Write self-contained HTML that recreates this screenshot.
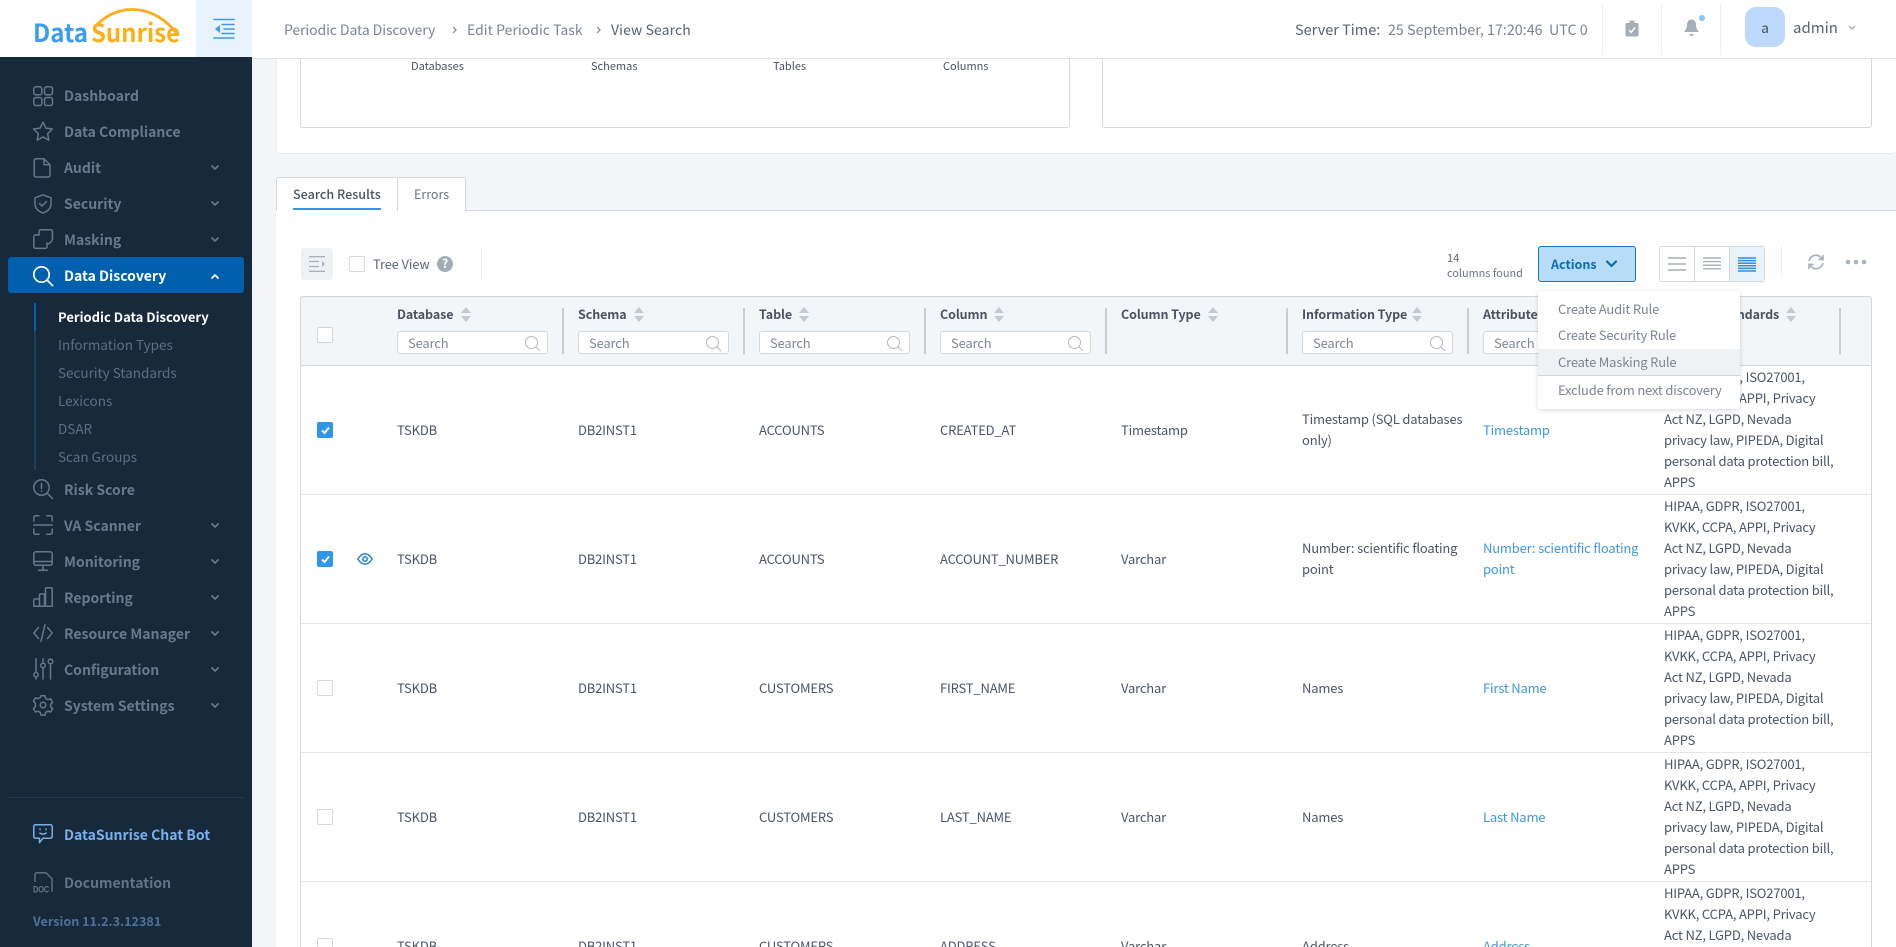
<!DOCTYPE html>
<html lang="en"><head><meta charset="utf-8"><title>DataSunrise</title>
<style>
*{box-sizing:border-box}
html,body{margin:0;padding:0;width:1896px;height:947px;overflow:hidden;background:#f3f6f8}
body{position:relative;font-family:"Noto Sans CJK SC","Liberation Sans",sans-serif;font-size:13px;letter-spacing:-.18px;color:#4b5563}
.a{position:absolute}
.t{position:absolute;white-space:nowrap;line-height:20px}
svg{position:absolute;display:block;overflow:visible}
#side{position:absolute;left:0;top:0;width:252px;height:947px;background:#172a3b}
.m{position:absolute;left:64px;white-space:nowrap;line-height:20px;font-size:14px;font-weight:700;letter-spacing:0;color:#647b8e}
.s{position:absolute;left:58px;white-space:nowrap;line-height:20px;font-size:13.5px;letter-spacing:0;color:#587084}
.i{fill:none;stroke:#62798b;stroke-width:1.5;stroke-linecap:round;stroke-linejoin:round}
.ch{fill:none;stroke:#62798b;stroke-width:1.8;stroke-linecap:round;stroke-linejoin:round}
.row{position:absolute;left:301px;width:1570px;height:129px;background:#fff;border-bottom:1px solid #e4e7ea}
.c{position:absolute;top:-1px;height:128px;display:flex;align-items:center;line-height:21px;white-space:nowrap;color:#4b5563}
.c5{position:absolute;top:0;height:65px;width:170px;overflow:hidden;padding-top:53px;line-height:21px;white-space:nowrap;color:#4b5563}
.l{color:#3f96e3}
.cb{position:absolute;left:16px;top:56px;width:16px;height:16px;border:1px solid #d3d7db;border-radius:2px;background:#fff}
.cb.on{background:#2f96ee;border-color:#2f96ee}
.hd{position:absolute;top:304px;white-space:nowrap;line-height:20px;font-size:12.5px;letter-spacing:-.1px;font-weight:700;color:#4a5360}
.sep{position:absolute;top:308px;width:2px;height:46px;background:#c6ced6}
.inp{position:absolute;top:331px;width:151px;height:23px;background:#fff;border:1px solid #d4d8dc;border-radius:3px;padding-left:10px;line-height:21px;font-size:13px;color:#7f8791}
.mi{position:absolute;left:20px;white-space:nowrap;line-height:20px;font-size:13px;letter-spacing:-.19px;color:#7d8590}
</style></head><body>

<!-- HEADER -->
<div class="a" style="left:252px;top:0;width:1644px;height:59px;background:#fff;border-bottom:1px solid #e2e5e8"></div>
<div class="t" style="left:284px;top:20px;font-size:14px;letter-spacing:-.1px;color:#7c858f">Periodic Data Discovery</div>
<svg style="left:452px;top:26px" width="5" height="8"><path d="M1 1l3 3-3 3" fill="none" stroke="#7c858f" stroke-width="1.2"/></svg>
<div class="t" style="left:467px;top:20px;font-size:14px;letter-spacing:.02px;color:#7c858f">Edit Periodic Task</div>
<svg style="left:596px;top:26px" width="5" height="8"><path d="M1 1l3 3-3 3" fill="none" stroke="#7c858f" stroke-width="1.2"/></svg>
<div class="t" style="left:611px;top:20px;font-size:14px;letter-spacing:.1px;color:#596270">View Search</div>

<div class="t" style="left:1295px;top:20px;font-size:14.5px;letter-spacing:0;color:#596270">Server Time:</div>
<div class="t" style="left:1388px;top:20px;font-size:14.3px;letter-spacing:0;color:#7c858f">25 September, 17:20:46</div>
<div class="t" style="left:1549px;top:20px;font-size:14.3px;letter-spacing:0;color:#7c858f">UTC 0</div>
<div class="a" style="left:1602px;top:3px;width:1px;height:52px;background:#eef0f2"></div>
<div class="a" style="left:1661px;top:3px;width:1px;height:52px;background:#eef0f2"></div>
<div class="a" style="left:1720px;top:3px;width:1px;height:52px;background:#eef0f2"></div>
<svg style="left:1625px;top:20px" width="14" height="17"><path d="M1.5 3h11a1 1 0 0 1 1 1v11.5a1 1 0 0 1-1 1h-11a1 1 0 0 1-1-1V4a1 1 0 0 1 1-1z" fill="#a6afb7"/><rect x="4.5" y="0.5" width="5" height="4" rx="1" fill="#a6afb7"/><path d="M4 10l2.2 2.4L10 7.5" fill="none" stroke="#fff" stroke-width="1.5"/></svg>
<svg style="left:1684px;top:19px" width="15" height="18"><path d="M7.5 0.5c3.2 0 4.5 2.6 4.5 5.5 0 3 1 4.5 2.5 6.2v.8H.5v-.8C2 10.500 3 9 3 6c0-2.900 1.300-5.500 4.500-5.500z" fill="#a6afb7"/><path d="M5.500 15h4a2 2 0 0 1-4 0z" fill="#a6afb7"/></svg>
<div class="a" style="left:1699px;top:15px;width:6px;height:6px;border-radius:50%;background:#86c5f7"></div>
<div class="a" style="left:1745px;top:7px;width:40px;height:40px;border-radius:11px;background:#bcd8fb"></div>
<div class="t" style="left:1745px;width:40px;text-align:center;top:18px;font-size:14px;color:#4a5360">a</div>
<div class="t" style="left:1793px;top:18px;font-size:15px;letter-spacing:0;color:#596270">admin</div>
<svg style="left:1848px;top:25px" width="8" height="6"><path d="M1 1l3 3 3-3" fill="none" stroke="#a6afb7" stroke-width="1.3"/></svg>

<!-- SIDEBAR -->
<div id="side">
<div class="a" style="left:0;top:0;width:196px;height:57px;background:#fff"></div>
<div class="a" style="left:196px;top:0;width:56px;height:57px;background:#e8f3fd"></div>
<svg style="left:0;top:0" width="196" height="57">
<text x="33" y="42" letter-spacing="0" font-family="'Noto Sans CJK SC','Liberation Sans',sans-serif" font-weight="700" font-size="25" fill="#3b9df0" textLength="55" lengthAdjust="spacingAndGlyphs">Data</text>
<text x="91" y="42" letter-spacing="0" font-family="'Noto Sans CJK SC','Liberation Sans',sans-serif" font-weight="700" font-size="25" fill="#fdb016" textLength="89" lengthAdjust="spacingAndGlyphs">Sunrise</text>
<path d="M97 24.500C108 14 120 9.500 132 9.500C150 9.500 166 19 177 34" fill="none" stroke="#fdb016" stroke-width="2.800" stroke-linecap="round"/>
</svg>
<svg style="left:213px;top:18px" width="22" height="22"><g fill="none" stroke="#3d9bea" stroke-width="1.6" stroke-linecap="round"><path d="M1 1.500h20M9 6.500h12M11 11h10M9 15.500h12M1 20h20"/></g><path d="M7 7v8l-5-4z" fill="#3d9bea"/></svg>

<svg class="i" style="left:33px;top:86px" width="20" height="20"><rect x=".8" y=".8" width="8" height="8" rx="2"/><rect x="11.500" y=".8" width="8" height="8" rx="2"/><rect x=".8" y="11.500" width="8" height="8" rx="2"/><rect x="11.500" y="11.500" width="8" height="8" rx="2"/></svg>
<div class="m" style="top:86px">Dashboard</div>
<svg class="i" style="left:33px;top:121px" width="20" height="21"><path d="M10 1.200l2.900 5.900 6.500.9-4.700 4.600 1.100 6.500-5.800-3.100-5.800 3.100 1.100-6.500L.6 8l6.500-.9z"/></svg>
<div class="m" style="top:122px">Data Compliance</div>
<svg class="i" style="left:34px;top:158px" width="17" height="20"><path d="M2 .8h8l6 6v10.500a1.700 1.700 0 0 1-1.700 1.700H2a1.700 1.700 0 0 1-1.700-1.700V2.500A1.700 1.700 0 0 1 2 .8zM10 .8v6h6"/></svg>
<div class="m" style="top:158px">Audit</div>
<svg class="ch" style="left:211px;top:165px" width="8" height="6"><path d="M1 1l3 3 3-3"/></svg>
<svg class="i" style="left:34px;top:194px" width="18" height="20"><path d="M9 .8l8 3v6c0 4.500-3.300 7.600-8 9.300-4.700-1.700-8-4.800-8-9.300v-6z"/><path d="M5.500 9.500l2.500 2.500 4.500-4.500"/></svg>
<div class="m" style="top:194px">Security</div>
<svg class="ch" style="left:211px;top:201px" width="8" height="6"><path d="M1 1l3 3 3-3"/></svg>
<svg class="i" style="left:33px;top:229px" width="20" height="20"><path d="M6 6V2.500A1.700 1.700 0 0 1 7.700.8h10a1.700 1.700 0 0 1 1.700 1.700v8a2 2 0 0 1-.6 1.400l-2.400 2.400a2 2 0 0 1-1.400.6H14M6 6H2.500A1.700 1.700 0 0 0 .8 7.700v10a1.700 1.700 0 0 0 1.700 1.700h9.800A1.700 1.700 0 0 0 14 17.700V14"/></svg>
<div class="m" style="top:230px">Masking</div>
<svg class="ch" style="left:211px;top:237px" width="8" height="6"><path d="M1 1l3 3 3-3"/></svg>

<div class="a" style="left:8px;top:257px;width:236px;height:36px;border-radius:3px;background:#0060ae"></div>
<svg style="left:33px;top:266px" width="20" height="20" fill="none" stroke="#fff" stroke-width="1.700" stroke-linecap="round"><circle cx="8.500" cy="8.500" r="7.700"/><path d="M14 14l5.500 5.500"/></svg>
<div class="m" style="top:266px;color:#fff">Data Discovery</div>
<svg style="left:211px;top:273px" width="8" height="6" fill="none" stroke="#fff" stroke-width="1.800" stroke-linecap="round" stroke-linejoin="round"><path d="M1 5l3-3 3 3"/></svg>

<div class="a" style="left:34px;top:303px;width:2px;height:167px;background:#1f3f58"></div>
<div class="a" style="left:34px;top:303px;width:2px;height:28px;background:#0060ae"></div>
<div class="s" style="top:307px;color:#fff;font-weight:700;font-size:13px">Periodic Data Discovery</div>
<div class="s" style="top:334px">Information Types</div>
<div class="s" style="top:362px">Security Standards</div>
<div class="s" style="top:390px">Lexicons</div>
<div class="s" style="top:418px">DSAR</div>
<div class="s" style="top:446px">Scan Groups</div>

<svg class="i" style="left:33px;top:479px" width="20" height="20"><circle cx="8.500" cy="8.500" r="7.700"/><path d="M14 14l5.500 5.500M8.500 4.500v5M8.500 12v.3"/></svg>
<div class="m" style="top:480px">Risk Score</div>
<svg class="i" style="left:33px;top:515px" width="20" height="20"><path d="M.8 6V2.500A1.700 1.700 0 0 1 2.500.8H6M14 .8h3.500a1.700 1.700 0 0 1 1.700 1.700V6M.8 14v3.500a1.700 1.700 0 0 0 1.700 1.700H6M14 19.200h3.500a1.700 1.700 0 0 0 1.700-1.700V14M.8 10h18.400"/></svg>
<div class="m" style="top:516px">VA Scanner</div>
<svg class="ch" style="left:211px;top:523px" width="8" height="6"><path d="M1 1l3 3 3-3"/></svg>
<svg class="i" style="left:33px;top:551px" width="20" height="20"><rect x=".8" y=".8" width="18.400" height="13.500" rx="2"/><path d="M.8 10.500h18.400M10 14.500v4.500M5.500 19.200h9"/></svg>
<div class="m" style="top:552px">Monitoring</div>
<svg class="ch" style="left:211px;top:559px" width="8" height="6"><path d="M1 1l3 3 3-3"/></svg>
<svg class="i" style="left:33px;top:587px" width="20" height="20"><path d="M.8 19.200V13a1 1 0 0 1 1-1h4.700v7.200zM6.500 19.200V8a1 1 0 0 1 1-1h4v12.200M12.500 19.200V1.800a1 1 0 0 1 1-1h4.700a1 1 0 0 1 1 1v17.400zM.8 19.200h18.400"/></svg>
<div class="m" style="top:588px">Reporting</div>
<svg class="ch" style="left:211px;top:595px" width="8" height="6"><path d="M1 1l3 3 3-3"/></svg>
<svg class="i" style="left:33px;top:623px" width="20" height="20"><path d="M5.500 4.500L.8 10l4.700 5.500M14.500 4.500L19.200 10l-4.700 5.500M12 1.500L8 18.500"/></svg>
<div class="m" style="top:624px">Resource Manager</div>
<svg class="ch" style="left:211px;top:631px" width="8" height="6"><path d="M1 1l3 3 3-3"/></svg>
<svg class="i" style="left:33px;top:658px" width="20" height="22"><path d="M3 .8v13.500M3 19v2M10 .8V5M10 10v11M17.500 .8V1M17.500 6v15"/><circle cx="3" cy="16.700" r="2.200"/><circle cx="10" cy="7.500" r="2.300"/><circle cx="17.500" cy="3.500" r="2.300"/></svg>
<div class="m" style="top:660px">Configuration</div>
<svg class="ch" style="left:211px;top:667px" width="8" height="6"><path d="M1 1l3 3 3-3"/></svg>
<svg class="i" style="left:33px;top:695px" width="20" height="20"><path d="M8 .8h4l.7 2.700 2.200 1.200 2.700-.8 2 3.400-2 1.900v2.500l2 1.900-2 3.400-2.700-.8-2.200 1.200-.7 2.700H8l-.7-2.700-2.200-1.200-2.700.8-2-3.400 2-1.900V8.200l-2-1.900 2-3.400 2.700.8 2.200-1.200z"/><circle cx="10" cy="10" r="2.800"/></svg>
<div class="m" style="top:696px">System Settings</div>
<svg class="ch" style="left:211px;top:703px" width="8" height="6"><path d="M1 1l3 3 3-3"/></svg>

<div class="a" style="left:8px;top:797px;width:236px;height:1px;background:#213a4e"></div>
<svg style="left:33px;top:824px" width="20" height="20" fill="none" stroke="#76aee8" stroke-width="1.500" stroke-linecap="round" stroke-linejoin="round"><path d="M2.500.8h15a1.700 1.700 0 0 1 1.700 1.700v10a1.700 1.700 0 0 1-1.700 1.700H10l-3.500 4.500v-4.500h-4A1.700 1.700 0 0 1 .8 12.500v-10A1.700 1.700 0 0 1 2.500.8z"/><path d="M7 5v.5M13 5v.5M6.800 9c1.500 1.500 4.900 1.500 6.400 0"/></svg>
<div class="m" style="top:825px;color:#79b0ee">DataSunrise Chat Bot</div>
<svg style="left:33px;top:872px" width="20" height="21" fill="none" stroke="#62798b" stroke-width="1.300"><path d="M2 10V2.500A1.700 1.700 0 0 1 3.700.8h9.300l6 6v13"/><text x="0" y="20.500" font-family="'Liberation Sans',sans-serif" font-size="9" font-weight="700" fill="#62798b" stroke="none" textLength="16" lengthAdjust="spacingAndGlyphs">DOC</text></svg>
<div class="m" style="top:873px;color:#5e7587">Documentation</div>
<div class="t" style="left:33px;top:911px;font-size:12.6px;letter-spacing:0;font-weight:700;color:#4f7199">Version 11.2.3.12381</div>
</div>

<!-- TOP CARD -->
<div class="a" style="left:276px;top:59px;width:1620px;height:95px;background:#fff;border-bottom:1px solid #e6e9ec;border-left:1px solid #eceef0;border-radius:0 0 4px 4px"></div>
<div class="a" style="left:300px;top:59px;width:770px;height:69px;border:1px solid #d4d8dc;border-top:0;border-radius:0 0 3px 3px;background:#fff"></div>
<div class="a" style="left:1102px;top:59px;width:770px;height:69px;border:1px solid #d4d8dc;border-top:0;border-radius:0 0 3px 3px;background:#fff"></div>
<div class="t" style="left:411px;top:56px;font-size:11px;letter-spacing:0;color:#4a5360">Databases</div>
<div class="t" style="left:591px;top:56px;font-size:11px;letter-spacing:0;color:#4a5360">Schemas</div>
<div class="t" style="left:773px;top:56px;font-size:11px;letter-spacing:0;color:#4a5360">Tables</div>
<div class="t" style="left:943px;top:56px;font-size:11px;letter-spacing:0;color:#4a5360">Columns</div>

<!-- TABS -->
<div class="a" style="left:276px;top:210px;width:1620px;height:737px;background:#fff;border-top:1px solid #d4d8dc"></div>
<div class="a" style="left:276px;top:177px;width:122px;height:34px;background:#fff;border:1px solid #d4d8dc;border-bottom:0;border-radius:3px 0 0 0"></div>
<div class="a" style="left:397px;top:177px;width:69px;height:34px;background:#fff;border:1px solid #d4d8dc;border-bottom:0;border-radius:0 3px 0 0"></div>
<div class="t" style="left:293px;top:184px;font-size:12.6px;letter-spacing:0;font-weight:500;color:#4a5360">Search Results</div>
<div class="t" style="left:414px;top:184px;font-size:12.5px;letter-spacing:0;color:#6c7480">Errors</div>
<div class="a" style="left:293px;top:208px;width:88px;height:2px;background:#3a93e0"></div>

<!-- TOOLBAR -->
<div class="a" style="left:301px;top:248px;width:32px;height:32px;border-radius:3px;background:#eef1f4"></div>
<svg style="left:309px;top:256px" width="16" height="16" fill="none" stroke="#a8b0b8" stroke-width="1.300"><path d="M0 .7h16M0 5.500h10M0 10.500h10M0 15.300h16"/><path d="M13 5v6l3-3z" fill="#a8b0b8" stroke="none"/></svg>
<div class="a" style="left:349px;top:256px;width:16px;height:16px;border:1px solid #d3d7db;border-radius:2px;background:#fff"></div>
<div class="t" style="left:373px;top:254px;font-size:12.7px;letter-spacing:0;color:#5c6570">Tree View</div>
<div class="a" style="left:437px;top:256px;width:16px;height:16px;border-radius:50%;background:#a3adb8;color:#fff;font-size:12px;font-weight:700;text-align:center;line-height:16px">?</div>
<div class="a" style="left:481px;top:248px;width:1px;height:32px;background:#e8eaec"></div>

<div class="t" style="left:1447px;top:248px;font-size:11px;letter-spacing:0;color:#5c6570">14</div>
<div class="t" style="left:1447px;top:263px;font-size:10.9px;letter-spacing:0;color:#6c7480">columns found</div>
<div class="a" style="left:1538px;top:246px;width:98px;height:36px;background:#b6dcf8;border:1px solid #1976c5;border-radius:3px"></div>
<div class="t" style="left:1551px;top:254px;font-size:12.5px;letter-spacing:0;font-weight:700;color:#0c6bb8">Actions</div>
<svg style="left:1606px;top:260px" width="11" height="8" fill="none" stroke="#0c6bb8" stroke-width="2.200" stroke-linecap="round" stroke-linejoin="round"><path d="M1 1.500l4.500 4.500L10 1.500"/></svg>

<div class="a" style="left:1659px;top:246px;width:106px;height:36px;background:#fff;border:1px solid #d4d8dc;border-radius:3px"></div>
<div class="a" style="left:1729px;top:247px;width:35px;height:34px;background:#e8f3fb;border-left:1px solid #d4d8dc"></div>
<div class="a" style="left:1694px;top:247px;width:1px;height:34px;background:#d4d8dc"></div>
<svg style="left:1668px;top:257px" width="18" height="15" stroke="#a8b0b4" stroke-width="1.500"><path d="M0 1h18M0 7h18M0 13h18"/></svg>
<svg style="left:1703px;top:257px" width="18" height="15" stroke="#a8b0b4" stroke-width="1.400"><path d="M0 1h18M0 4.600h18M0 8.200h18M0 11.800h18"/></svg>
<svg style="left:1738px;top:257px" width="18" height="15" stroke="#2f8fe6" stroke-width="1.500"><path d="M0 1h18M0 3.600h18M0 6.200h18M0 8.800h18M0 11.400h18M0 14h18"/></svg>
<div class="a" style="left:1781px;top:246px;width:1px;height:32px;background:#eceef0"></div>
<svg style="left:1808px;top:254px" width="16" height="16" fill="none" stroke="#aab2ba" stroke-width="1.700"><path d="M1 7A7 7 0 0 1 13 3.500L15 5.500M15 1v4.500h-4.500M15 9A7 7 0 0 1 3 12.500L1 10.500M1 15v-4.500h4.500"/></svg>
<svg style="left:1845px;top:259px" width="22" height="6" fill="#aab2ba"><circle cx="3" cy="3" r="2.300"/><circle cx="11" cy="3" r="2.300"/><circle cx="19" cy="3" r="2.300"/></svg>

<!-- TABLE HEADER -->
<div class="a" style="left:300px;top:296px;width:1572px;height:70px;background:#f3f6f8;border:1px solid #d4d8dc;border-radius:3px 3px 0 0"></div>
<div class="a" style="left:300px;top:366px;width:1px;height:581px;background:#d4d8dc"></div>
<div class="a" style="left:1871px;top:366px;width:1px;height:581px;background:#d4d8dc"></div>
<div class="a" style="left:317px;top:327px;width:16px;height:16px;border:1px solid #d3d7db;border-radius:2px;background:#fff"></div>

<div class="hd" style="left:397px">Database</div>
<div class="hd" style="left:578px">Schema</div>
<div class="hd" style="left:759px">Table</div>
<div class="hd" style="left:940px">Column</div>
<div class="hd" style="left:1121px">Column Type</div>
<div class="hd" style="left:1302px">Information Type</div>
<div class="hd" style="left:1483px">Attribute</div>
<div class="hd" style="left:1664px">Security Standards</div>

<svg style="left:461px;top:307px" width="10" height="15" fill="#c3cad2"><path d="M5 0l5 6H0zM5 15l5-6H0z"/></svg>
<svg style="left:634px;top:307px" width="10" height="15" fill="#c3cad2"><path d="M5 0l5 6H0zM5 15l5-6H0z"/></svg>
<svg style="left:799px;top:307px" width="10" height="15" fill="#c3cad2"><path d="M5 0l5 6H0zM5 15l5-6H0z"/></svg>
<svg style="left:994px;top:307px" width="10" height="15" fill="#c3cad2"><path d="M5 0l5 6H0zM5 15l5-6H0z"/></svg>
<svg style="left:1208px;top:307px" width="10" height="15" fill="#c3cad2"><path d="M5 0l5 6H0zM5 15l5-6H0z"/></svg>
<svg style="left:1412px;top:307px" width="10" height="15" fill="#c3cad2"><path d="M5 0l5 6H0zM5 15l5-6H0z"/></svg>
<svg style="left:1786px;top:307px" width="10" height="15" fill="#c3cad2"><path d="M5 0l5 6H0zM5 15l5-6H0z"/></svg>

<div class="sep" style="left:562px"></div><div class="sep" style="left:743px"></div><div class="sep" style="left:924px"></div><div class="sep" style="left:1105px"></div><div class="sep" style="left:1286px"></div><div class="sep" style="left:1467px"></div><div class="sep" style="left:1839px"></div>

<div class="inp" style="left:397px">Search<svg style="right:7px;top:4px" width="15" height="15" fill="none" stroke="#b3b9c0" stroke-width="1"><circle cx="6.500" cy="6.500" r="6"/><path d="M11 11l4 4"/></svg></div>
<div class="inp" style="left:578px">Search<svg style="right:7px;top:4px" width="15" height="15" fill="none" stroke="#b3b9c0" stroke-width="1"><circle cx="6.500" cy="6.500" r="6"/><path d="M11 11l4 4"/></svg></div>
<div class="inp" style="left:759px">Search<svg style="right:7px;top:4px" width="15" height="15" fill="none" stroke="#b3b9c0" stroke-width="1"><circle cx="6.500" cy="6.500" r="6"/><path d="M11 11l4 4"/></svg></div>
<div class="inp" style="left:940px">Search<svg style="right:7px;top:4px" width="15" height="15" fill="none" stroke="#b3b9c0" stroke-width="1"><circle cx="6.500" cy="6.500" r="6"/><path d="M11 11l4 4"/></svg></div>
<div class="inp" style="left:1302px">Search<svg style="right:7px;top:4px" width="15" height="15" fill="none" stroke="#b3b9c0" stroke-width="1"><circle cx="6.500" cy="6.500" r="6"/><path d="M11 11l4 4"/></svg></div>
<div class="inp" style="left:1483px">Search</div>

<!-- ROWS -->
<div class="row" style="top:366px">
<div class="cb on"><svg style="left:3px;top:3px" width="9" height="9" fill="none" stroke="#fff" stroke-width="2"><path d="M1 4.500l2.500 2.500L8 1.500"/></svg></div>
<div class="c" style="left:96px">TSKDB</div><div class="c" style="left:277px">DB2INST1</div><div class="c" style="left:458px">ACCOUNTS</div><div class="c" style="left:639px">CREATED_AT</div><div class="c" style="left:820px">Timestamp</div>
<div class="c" style="left:1001px">Timestamp (SQL databases<br>only)</div>
<div class="c" style="left:1182px"><span class="l">Timestamp</span></div>
<div class="c" style="left:1363px"><span>HIPAA, GDPR, ISO27001,<br>KVKK, CCPA, APPI, Privacy<br>Act NZ, LGPD, Nevada<br>privacy law, PIPEDA, Digital<br>personal data protection bill,<br>APPS</span></div>
</div>
<div class="row" style="top:495px">
<div class="cb on"><svg style="left:3px;top:3px" width="9" height="9" fill="none" stroke="#fff" stroke-width="2"><path d="M1 4.500l2.500 2.500L8 1.500"/></svg></div>
<svg style="left:56px;top:58px" width="16" height="12" fill="none" stroke="#3187d6" stroke-width="1.600"><path d="M.8 6C3 2.500 5.500 .8 8 .8S13 2.500 15.200 6C13 9.500 10.500 11.200 8 11.200S3 9.500 .8 6z"/><circle cx="8" cy="6" r="2.200"/></svg>
<div class="c" style="left:96px">TSKDB</div><div class="c" style="left:277px">DB2INST1</div><div class="c" style="left:458px">ACCOUNTS</div><div class="c" style="left:639px">ACCOUNT_NUMBER</div><div class="c" style="left:820px">Varchar</div>
<div class="c" style="left:1001px">Number: scientific floating<br>point</div>
<div class="c" style="left:1182px"><span class="l">Number: scientific floating<br>point</span></div>
<div class="c" style="left:1363px"><span>HIPAA, GDPR, ISO27001,<br>KVKK, CCPA, APPI, Privacy<br>Act NZ, LGPD, Nevada<br>privacy law, PIPEDA, Digital<br>personal data protection bill,<br>APPS</span></div>
</div>
<div class="row" style="top:624px">
<div class="cb"></div>
<div class="c" style="left:96px">TSKDB</div><div class="c" style="left:277px">DB2INST1</div><div class="c" style="left:458px">CUSTOMERS</div><div class="c" style="left:639px">FIRST_NAME</div><div class="c" style="left:820px">Varchar</div>
<div class="c" style="left:1001px">Names</div>
<div class="c" style="left:1182px"><span class="l">First Name</span></div>
<div class="c" style="left:1363px"><span>HIPAA, GDPR, ISO27001,<br>KVKK, CCPA, APPI, Privacy<br>Act NZ, LGPD, Nevada<br>privacy law, PIPEDA, Digital<br>personal data protection bill,<br>APPS</span></div>
</div>
<div class="row" style="top:753px">
<div class="cb"></div>
<div class="c" style="left:96px">TSKDB</div><div class="c" style="left:277px">DB2INST1</div><div class="c" style="left:458px">CUSTOMERS</div><div class="c" style="left:639px">LAST_NAME</div><div class="c" style="left:820px">Varchar</div>
<div class="c" style="left:1001px">Names</div>
<div class="c" style="left:1182px"><span class="l">Last Name</span></div>
<div class="c" style="left:1363px"><span>HIPAA, GDPR, ISO27001,<br>KVKK, CCPA, APPI, Privacy<br>Act NZ, LGPD, Nevada<br>privacy law, PIPEDA, Digital<br>personal data protection bill,<br>APPS</span></div>
</div>
<div class="row" style="top:882px;height:65px;border-bottom:0;overflow:hidden">
<div class="cb" style="height:9px;border-bottom:0;border-radius:2px 2px 0 0"></div>
<div class="c5" style="left:96px">TSKDB</div><div class="c5" style="left:277px">DB2INST1</div><div class="c5" style="left:458px">CUSTOMERS</div><div class="c5" style="left:639px">ADDRESS</div><div class="c5" style="left:820px">Varchar</div>
<div class="c5" style="left:1001px">Address</div>
<div class="c5 l" style="left:1182px;color:#3f96e3">Address</div>
<div class="c5" style="left:1363px;padding-top:0">HIPAA, GDPR, ISO27001,<br>KVKK, CCPA, APPI, Privacy<br>Act NZ, LGPD, Nevada</div>
</div>

<!-- DROPDOWN -->
<div class="a" style="left:1538px;top:291px;width:202px;height:118px;background:#fff;border-radius:3px;box-shadow:0 1px 5px rgba(60,70,80,.22)">
<div class="a" style="left:0;top:58px;width:202px;height:27px;background:#eff2f5;border-bottom:1px solid #d4d8dc"></div>
<div class="mi" style="top:8px">Create Audit Rule</div>
<div class="mi" style="top:34px">Create Security Rule</div>
<div class="mi" style="top:61px">Create Masking Rule</div>
<div class="mi" style="top:89px">Exclude from next discovery</div>
</div>
</body></html>
